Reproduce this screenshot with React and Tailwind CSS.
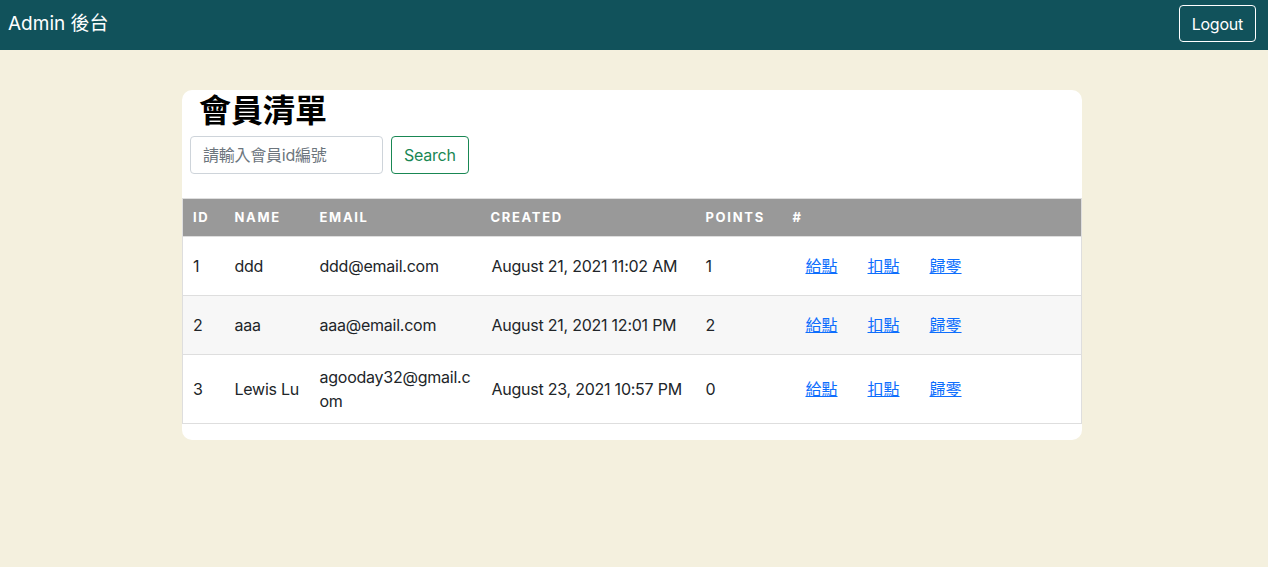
import React, { useState } from "react";

const members = [
  { id: 1, name: "ddd", email: "ddd@email.com", created: "August 21, 2021 11:02 AM", points: 1 },
  { id: 2, name: "aaa", email: "aaa@email.com", created: "August 21, 2021 12:01 PM", points: 2 },
  { id: 3, name: "Lewis Lu", email: "agooday32@gmail.com", created: "August 23, 2021 10:57 PM", points: 0 },
];

const font = { fontFamily: 'Inter, "Noto Sans CJK TC", sans-serif' };

export default function App() {
  const [query, setQuery] = useState("");

  return (
    <div className="min-h-[567px] bg-[#f4f0de] text-[#212529] tracking-[-0.015em]" style={font}>
      {/* NAVBAR */}
      <nav className="h-[50px] bg-[#11525b] flex justify-between pl-[8px] pr-[12px]">
        <span className="text-white text-[19px] leading-none mt-[14px] tracking-normal">Admin 後台</span>
        <button className="h-[37px] mt-[5px] px-[12px] border border-white rounded-[4px] text-white text-[16px]">
          Logout
        </button>
      </nav>

      {/* CARD */}
      <div className="w-[900px] ml-[182px] mt-[40px] bg-white rounded-[10px] pb-[16px]">
        <div className="px-[8px]">
          <h2 className="pl-[9px] text-[32px] font-bold leading-[38px] pt-[2px] text-black tracking-normal">會員清單</h2>
          <div className="flex gap-[8px] mt-[6px]">
            <input
              value={query}
              onChange={(e) => setQuery(e.target.value)}
              placeholder="請輸入會員id編號"
              className="w-[193px] h-[38px] px-[12px] border border-[#ced4da] rounded-[4px] text-[16px] outline-none placeholder:text-[#6c757d]"
            />
            <button className="h-[38px] px-[12px] border border-[#198754] rounded-[4px] text-[#198754] text-[16px]">
              Search
            </button>
          </div>
        </div>

        <table className="w-full table-fixed border-collapse border border-[#dedede] mt-[24px] text-[16px]">
          <colgroup>
            <col className="w-[42px]" />
            <col className="w-[85px]" />
            <col className="w-[171px]" />
            <col className="w-[215px]" />
            <col className="w-[87px]" />
            <col />
          </colgroup>
          <thead>
            <tr className="bg-[#999999] text-white text-[13px] font-extrabold tracking-[0.13em] uppercase">
              <th className="text-left px-[10px] h-[38px]">ID</th>
              <th className="text-left px-[10px] h-[38px]">Name</th>
              <th className="text-left px-[10px] h-[38px]">Email</th>
              <th className="text-left px-[10px] h-[38px]">Created</th>
              <th className="text-left px-[10px] h-[38px]">Points</th>
              <th className="text-left px-[10px] h-[38px]">#</th>
            </tr>
          </thead>
          <tbody>
            {members.map((m, i) => (
              <tr key={m.id} className={`border-t border-[#dedede] ${i === 1 ? "bg-[#f7f7f7]" : "bg-white"}`}>
                <td className="px-[10px] py-[10px] h-[59px] leading-[24px]">{m.id}</td>
                <td className="px-[10px] py-[10px] leading-[24px]">{m.name}</td>
                <td className="px-[10px] py-[10px] leading-[24px] break-all">{m.email}</td>
                <td className="pl-[11px] pr-[9px] py-[10px] leading-[24px]">{m.created}</td>
                <td className="px-[10px] py-[10px] leading-[24px]">{m.points}</td>
                <td className="px-[10px] py-[10px] leading-[24px]">
                  <div className="flex gap-[30px] ml-[13px] tracking-normal">
                    <a href="#" className="text-[#0d6efd] underline">給點</a>
                    <a href="#" className="text-[#0d6efd] underline">扣點</a>
                    <a href="#" className="text-[#0d6efd] underline">歸零</a>
                  </div>
                </td>
              </tr>
            ))}
          </tbody>
        </table>
      </div>
    </div>
  );
}
